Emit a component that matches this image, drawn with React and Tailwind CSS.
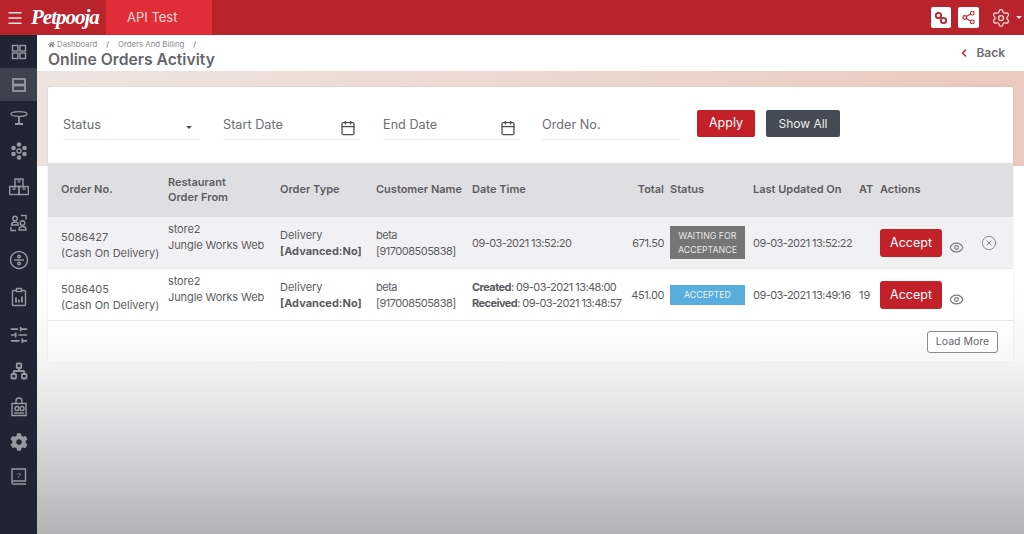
import React from 'react';
import { Menu, Share2, Settings, Calendar, Eye, CircleX, ChevronLeft, SlidersHorizontal, Network } from 'lucide-react';
import { FaCog, FaHome } from 'react-icons/fa';

const ORDERS = [
  {
    id: '5086427',
    bg: 'bg-[#f1f1f3]',
    date: <div>09-03-2021 13:52:20</div>,
    total: '671.50',
    status: 'waiting',
    updated: '09-03-2021 13:52:22',
    at: '',
    cancel: true,
  },
  {
    id: '5086405',
    bg: 'bg-white',
    date: (
      <div>
        <div><b className="font-bold">Created</b>: 09-03-2021 13:48:00</div>
        <div><b className="font-bold">Received</b>: 09-03-2021 13:48:57</div>
      </div>
    ),
    total: '451.00',
    status: 'accepted',
    updated: '09-03-2021 13:49:16',
    at: '19',
    cancel: false,
  },
];

const GRID = 'grid grid-cols-[107px_112px_96px_96px_157px_35px_89px_106px_21px_1fr] pl-[13px]';

function SideItem({ h, active, children }) {
  return (
    <div className={`${h} flex items-center justify-center ${active ? 'bg-[#3c424e]' : ''}`}>
      {children}
    </div>
  );
}

function SideSvg({ children }) {
  return (
    <svg width="20" height="20" viewBox="0 0 20 20" fill="none" stroke="#96999f" strokeWidth="1.4">
      {children}
    </svg>
  );
}

function Sidebar() {
  return (
    <div className="w-[37px] shrink-0 bg-[#1f2533]">
      <SideItem h="h-[33px]">
        <SideSvg>
          <rect x="3.500" y="3.500" width="5.500" height="5.500" /><rect x="11" y="3.500" width="5.500" height="5.500" />
          <rect x="3.500" y="11" width="5.500" height="5.500" /><rect x="11" y="11" width="5.500" height="5.500" />
        </SideSvg>
      </SideItem>
      <SideItem h="h-[33px]" active>
        <SideSvg>
          <rect x="4" y="4" width="12" height="5.500" strokeWidth="1.800" /><rect x="4" y="10.500" width="12" height="5.500" strokeWidth="1.800" />
        </SideSvg>
      </SideItem>
      <SideItem h="h-[33px]">
        <SideSvg>
          <ellipse cx="10" cy="6" rx="8" ry="2.400" /><path d="M10 8.500v7M6 16h8" strokeWidth="1.800" />
        </SideSvg>
      </SideItem>
      <SideItem h="h-[34px]">
        <SideSvg>
          <circle cx="10" cy="10" r="2" />
          <circle cx="10" cy="3.500" r="1.600" fill="#96999f" /><circle cx="10" cy="16.500" r="1.600" fill="#96999f" />
          <circle cx="4.500" cy="7" r="1.600" fill="#96999f" /><circle cx="15.500" cy="7" r="1.600" fill="#96999f" />
          <circle cx="4.500" cy="13" r="1.600" fill="#96999f" /><circle cx="15.500" cy="13" r="1.600" fill="#96999f" />
        </SideSvg>
      </SideItem>
      <SideItem h="h-[37px]">
        <SideSvg>
          <rect x="6" y="2" width="8" height="7.500" /><rect x="0.700" y="9.500" width="9.300" height="8" /><rect x="10" y="9.500" width="9.300" height="8" />
          <path d="M9 2v3h2V2M4 9.500v3h2v-3M14 9.500v3h2v-3" strokeWidth="1" />
        </SideSvg>
      </SideItem>
      <SideItem h="h-[36px]">
        <SideSvg>
          <circle cx="6" cy="5.500" r="2.200" /><path d="M2.500 12c0-2 1.500-3 3.500-3s3.500 1 3.500 3z" />
          <circle cx="13.500" cy="10" r="2.200" /><path d="M10 17c0-2.500 1.500-3.500 3.500-3.500S17 14.500 17 17z" />
          <path d="M12 2.500h5v4M2 14v3.500h5" />
        </SideSvg>
      </SideItem>
      <SideItem h="h-[37px]">
        <SideSvg>
          <circle cx="10" cy="10" r="8.500" /><path d="M5 10h10" />
          <circle cx="10" cy="6.500" r="1.300" /><circle cx="10" cy="13.500" r="1.300" />
        </SideSvg>
      </SideItem>
      <SideItem h="h-[38px]">
        <SideSvg>
          <rect x="3.500" y="3.500" width="13" height="15" rx="1" /><rect x="7.500" y="1.500" width="5" height="3" fill="#1f2533" />
          <path d="M7 15.500v-5M10 15.500v-3M13 15.500v-6" strokeWidth="1.800" />
        </SideSvg>
      </SideItem>
      <SideItem h="h-[37px]">
        <SlidersHorizontal size={20} color="#96999f" strokeWidth={2} />
      </SideItem>
      <SideItem h="h-[35px]">
        <Network size={18} color="#96999f" strokeWidth={2.400} />
      </SideItem>
      <SideItem h="h-[37px]">
        <SideSvg>
          <path d="M3 6.500h14v12H3zM7 6.500V4a3 3 0 0 1 6 0v2.500" />
          <circle cx="8" cy="11.500" r="2" /><circle cx="13" cy="11.500" r="2" /><path d="M5 16h10" />
        </SideSvg>
      </SideItem>
      <SideItem h="h-[34px]">
        <FaCog size={18} color="#96999f" />
      </SideItem>
      <SideItem h="h-[33px]">
        <SideSvg>
          <path d="M3 16.500V3h13.500v12H4.500a1.500 1.500 0 0 0 0 3h12.500" />
          <text x="9.700" y="11.500" fontSize="8" textAnchor="middle" fill="#96999f" stroke="none" fontFamily="Liberation Sans, sans-serif">?</text>
        </SideSvg>
      </SideItem>
    </div>
  );
}

function Field({ label, width, icon, caret }) {
  return (
    <div className={`${width} h-[29px] border-b border-[#eeeeee] flex justify-between text-[12.700px] leading-[18px] text-[#6e6e72] pt-[5px]`}>
      <span>{label}</span>
      {icon && <Calendar size={16} color="#4d4f53" strokeWidth={1.900} className="mr-[4px] mt-[4px]" />}
      {caret && <span className="mr-[8px] mt-[10px] w-0 h-0 border-x-[3px] border-x-transparent border-t-[3px] border-t-[#4d4f53]" />}
    </div>
  );
}

function Badge({ status }) {
  if (status === 'waiting') {
    return (
      <div className="w-[75px] h-[33px] bg-[#757575] text-[#e9e9e9] text-[8.800px] leading-[13.500px] text-center pt-[3px]">
        WAITING FOR<br />ACCEPTANCE
      </div>
    );
  }
  return (
    <div className="w-[75px] h-[20px] bg-[#5aaedd] text-[#e8f4fb] text-[8.800px] leading-[20px] text-center">ACCEPTED</div>
  );
}

function Row({ order }) {
  return (
    <div className={`${GRID} ${order.bg} h-[52px] items-center text-[11px] leading-[16px] text-[#5c5c60] border-b border-[#e6e6e8]`}>
      <div className="pt-[4px]">{order.id}<br />(Cash On Delivery)</div>
      <div className="pb-[12px] tracking-[-0.1px]">store2<br />Jungle Works Web</div>
      <div className="pt-[1px]">Delivery<br /><b className="font-bold">[Advanced:No]</b></div>
      <div className="pt-[1px] tracking-[-0.5px]">beta<br />[917008505838]</div>
      <div className="tracking-[-0.55px] whitespace-nowrap">{order.date}</div>
      <div className="text-right tracking-[-0.4px]">{order.total}</div>
      <div className="pl-[6px]"><Badge status={order.status} /></div>
      <div className="tracking-[-0.55px] whitespace-nowrap">{order.updated}</div>
      <div>{order.at}</div>
      <div className="flex items-center">
        <button className="w-[62px] h-[28px] rounded-[3px] bg-[#c32129] text-white text-[12.500px]">Accept</button>
        <Eye size={15} color="#77797d" strokeWidth={1.800} className="ml-[7px] mt-[10px]" />
        {order.cancel && <CircleX size={16} color="#77797d" strokeWidth={1.300} className="ml-[17px]" />}
      </div>
    </div>
  );
}

export default function App() {
  return (
    <div className="w-[1024px] h-[534px] overflow-hidden flex flex-col bg-white font-['Inter',sans-serif]">
      {/* top bar */}
      <div className="h-[35px] shrink-0 bg-[#b9242c] flex items-center">
        <div className="w-[27px] flex justify-center pl-[3px]"><Menu size={18} color="#f4dcdc" strokeWidth={2} /></div>
        <div className="ml-[4px] w-[75px] text-white italic font-bold text-[21px] tracking-[-1px] font-['Liberation_Serif',serif]">Petpooja</div>
        <div className="w-[106px] h-full bg-[#e02d38] flex items-center pl-[21px] text-[#f7dcdc] text-[13px]">API Test</div>
        <div className="ml-auto flex items-center pr-[2px]">
          <div className="w-[20px] h-[21px] rounded-[2px] bg-white flex items-center justify-center">
            <svg width="14" height="14" viewBox="0 0 14 14" fill="none" stroke="#b9242c" strokeWidth="1.800">
              <circle cx="4.500" cy="4.500" r="2.700" /><circle cx="9.500" cy="9.500" r="2.700" />
            </svg>
          </div>
          <div className="w-[21px] h-[21px] rounded-[2px] bg-white flex items-center justify-center ml-[7px]">
            <Share2 size={15} color="#b9242c" strokeWidth={1.700} />
          </div>
          <Settings size={20} color="#f6e2e2" strokeWidth={1.500} className="ml-[12px]" />
          <span className="ml-[5px] w-0 h-0 border-x-[3px] border-x-transparent border-t-[3px] border-t-[#f6e2e2]" />
        </div>
      </div>

      <div className="flex-1 flex min-h-0">
        <Sidebar />
        <div className="flex-1 min-w-0 flex flex-col">
          {/* breadcrumb */}
          <div className="h-[36px] shrink-0 bg-white pl-[11px] pr-[19px] flex justify-between shadow-[0_1px_2px_rgba(0,0,0,0.06)]">
            <div>
              <div className="flex items-center text-[7.800px] text-[#8b8b8f] pt-[4px] h-[15px]">
                <FaHome size={7} color="#8b8b8f" className="mr-[2px]" />
                <span>Dashboard</span>
                <span className="mx-[9px] text-[#6e6e72]">/</span>
                <span>Orders And Billing</span>
                <span className="ml-[9px] text-[#6e6e72]">/</span>
              </div>
              <div className="text-[15.700px] leading-[20px] font-semibold text-[#66666a]">Online Orders Activity</div>
            </div>
            <div className="flex items-center h-[18px] mt-[9px] text-[12px] font-semibold text-[#6e6e72]">
              <ChevronLeft size={12} color="#c32129" strokeWidth={3} className="mr-[6px]" />Back
            </div>
          </div>

          {/* page background: tinted band at the top, white, then grey towards the bottom */}
          <div className="flex-1 min-h-0 pt-[16px] pl-[11px] [background:linear-gradient(to_right,#eee4df,#ecd8d1,#ebc9bf)_top/100%_95px_no-repeat,linear-gradient(to_bottom,#ffffff_0,#ffffff_215px,#f4f4f5_291px,#dedee0_355px,#b4b4b6_463px)]">
            <div className="w-[965px] bg-white rounded-[2px] shadow-[0_0_2px_rgba(0,0,0,0.12)]">
              {/* filters */}
              <div className="h-[76px] flex items-start pt-[24px] pl-[15px]">
                <Field label="Status" width="w-[137px]" caret />
                <div className="w-[23px]" />
                <Field label="Start Date" width="w-[137px]" icon />
                <div className="w-[23px]" />
                <Field label="End Date" width="w-[137px]" icon />
                <div className="w-[22px]" />
                <Field label="Order No." width="w-[137px]" />
                <button className="ml-[18px] -mt-[1px] w-[58px] h-[27px] rounded-[2px] bg-[#c32129] text-white text-[12.500px]">Apply</button>
                <button className="ml-[11px] -mt-[1px] w-[74px] h-[27px] rounded-[2px] bg-[#454b55] text-[#eeeeee] text-[12px]">Show All</button>
              </div>

              {/* table */}
              <div className={`${GRID} h-[54px] items-center bg-[#dfdfe2] text-[11px] leading-[15.500px] font-semibold text-[#5c5c60]`}>
                <div>Order No.</div>
                <div>Restaurant<br />Order From</div>
                <div>Order Type</div>
                <div className="whitespace-nowrap">Customer Name</div>
                <div>Date Time</div>
                <div className="text-right">Total</div>
                <div className="pl-[6px]">Status</div>
                <div className="whitespace-nowrap">Last Updated On</div>
                <div>AT</div>
                <div>Actions</div>
              </div>
              {ORDERS.map(o => <Row key={o.id} order={o} />)}

              <div className="h-[41px] flex items-center justify-end pr-[15px] bg-gradient-to-b from-white to-[#f6f6f6]">
                <button className="w-[71px] h-[22px] rounded-[3px] border border-[#8b8b8f] bg-white text-[10.500px] text-[#66666a]">Load More</button>
              </div>
            </div>
          </div>
        </div>
      </div>
    </div>
  );
}
